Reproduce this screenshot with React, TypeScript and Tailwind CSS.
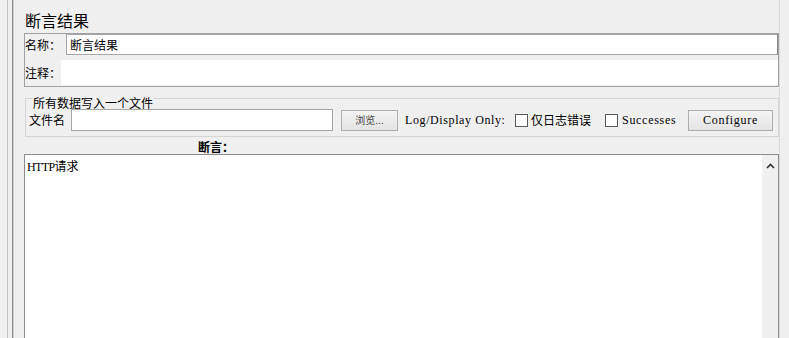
const cjk = { fontFamily: '"Noto Sans CJK SC", "Noto Sans", sans-serif' };

function Checkbox() {
  return <div className="w-[13px] h-[13px] border border-[#5a5a5a] bg-white shrink-0" />;
}

function Btn({ children, className }: { children: React.ReactNode; className: string }) {
  return (
    <div
      className={`h-[21px] border border-[#adadad] bg-gradient-to-b from-[#f4f4f4] to-[#e4e4e4] flex items-center justify-center shrink-0 ${className}`}
    >
      {children}
    </div>
  );
}

export default function App() {
  return (
    <div className="w-[789px] h-[338px] bg-[#f0f0f0] flex overflow-hidden text-black" style={cjk}>
      {/* left splitter edges */}
      <div className="w-[7px] shrink-0" />
      <div className="w-px bg-[#c4c4c4] shrink-0" />
      <div className="w-[4px] shrink-0" />
      <div className="w-px bg-[#8c8c8c] shrink-0" />
      <div className="w-px bg-[#d0d0d0] shrink-0" />
      <div className="w-[10px] shrink-0" />

      <div className="w-[755px] shrink-0 flex flex-col">
        {/* title */}
        <div className="h-[33px] pt-[10px] pl-px text-[16px] leading-[20px]">断言结果</div>

        {/* name / comment */}
        <div className="h-[54px] border border-[#a0a0a0] flex flex-col">
          <div className="flex h-[21px] items-center">
            <div className="w-[41px] text-[12px] leading-[14px]">名称：</div>
            <div className="flex-1 h-[21px] border border-[#a6a6a6] border-r-[#8a8a8a] bg-white pl-[3px] text-[12px] leading-[19px]">
              断言结果
            </div>
          </div>
          <div className="flex h-[25px] mt-[5px] items-center">
            <div className="w-[36px] text-[12px] leading-[14px]">注释：</div>
            <div className="flex-1 h-[25px] bg-white" />
          </div>
        </div>

        {/* file group */}
        <div className="mt-[11px] ml-px border border-[#d5d5d5] pb-[5px]">
          <div className="-mt-[2px] ml-[6px] w-fit px-px bg-[#f0f0f0] text-[12px] leading-[12px]">
            所有数据写入一个文件
          </div>
          <div className="flex items-center h-[22px]">
            <div className="ml-[3px] w-[36px] text-[12px] leading-[14px]">文件名</div>
            <div className="ml-[6px] w-[262px] h-[22px] border border-[#a6a6a6] bg-white shrink-0" />
            <Btn className="ml-[8px] w-[57px]">
              <span className="text-[10px] text-[#444] leading-[12px]">浏览...</span>
            </Btn>
            <div className="ml-[7px] w-[100px] font-['Liberation_Serif',serif] text-[12px] tracking-[0.6px] whitespace-nowrap leading-[14px]">
              Log/Display Only:
            </div>
            <div className="ml-[10px]">
              <Checkbox />
            </div>
            <div className="ml-[3px] text-[12px] leading-[14px] whitespace-nowrap">仅日志错误</div>
            <div className="ml-[14px]">
              <Checkbox />
            </div>
            <div className="ml-[4px] w-[56px] font-['Liberation_Serif',serif] text-[12px] tracking-[0.7px] leading-[14px]">
              Successes
            </div>
            <Btn className="ml-[10px] w-[85px]">
              <span className="font-['Liberation_Serif',serif] text-[12px] tracking-[0.7px] leading-[14px]">
                Configure
              </span>
            </Btn>
          </div>
        </div>

        {/* assertion label */}
        <div className="h-[17px] pl-[174px] pt-[3px] text-[12px] leading-[14px] font-bold">断言：</div>

        {/* text area */}
        <div className="flex-1 flex border-t border-l border-r border-[#8c8c8c] bg-white">
          <div className="flex-1 pl-[2px] pt-[5px] text-[12px] leading-[14px] font-['Liberation_Serif','Noto_Sans_CJK_SC',serif]">
            <span className="tracking-[-0.6px]">HTTP</span>请求
          </div>
          <div className="w-[16px] bg-[#f0f0f0] flex justify-center pt-[8px]">
            <svg width="9" height="6" viewBox="0 0 9 6">
              <polyline points="1,5 4.5,1.5 8,5" fill="none" stroke="#333" strokeWidth="1.6" />
            </svg>
          </div>
        </div>
      </div>

      <div className="w-px bg-[#dadada] shrink-0" />
    </div>
  );
}
